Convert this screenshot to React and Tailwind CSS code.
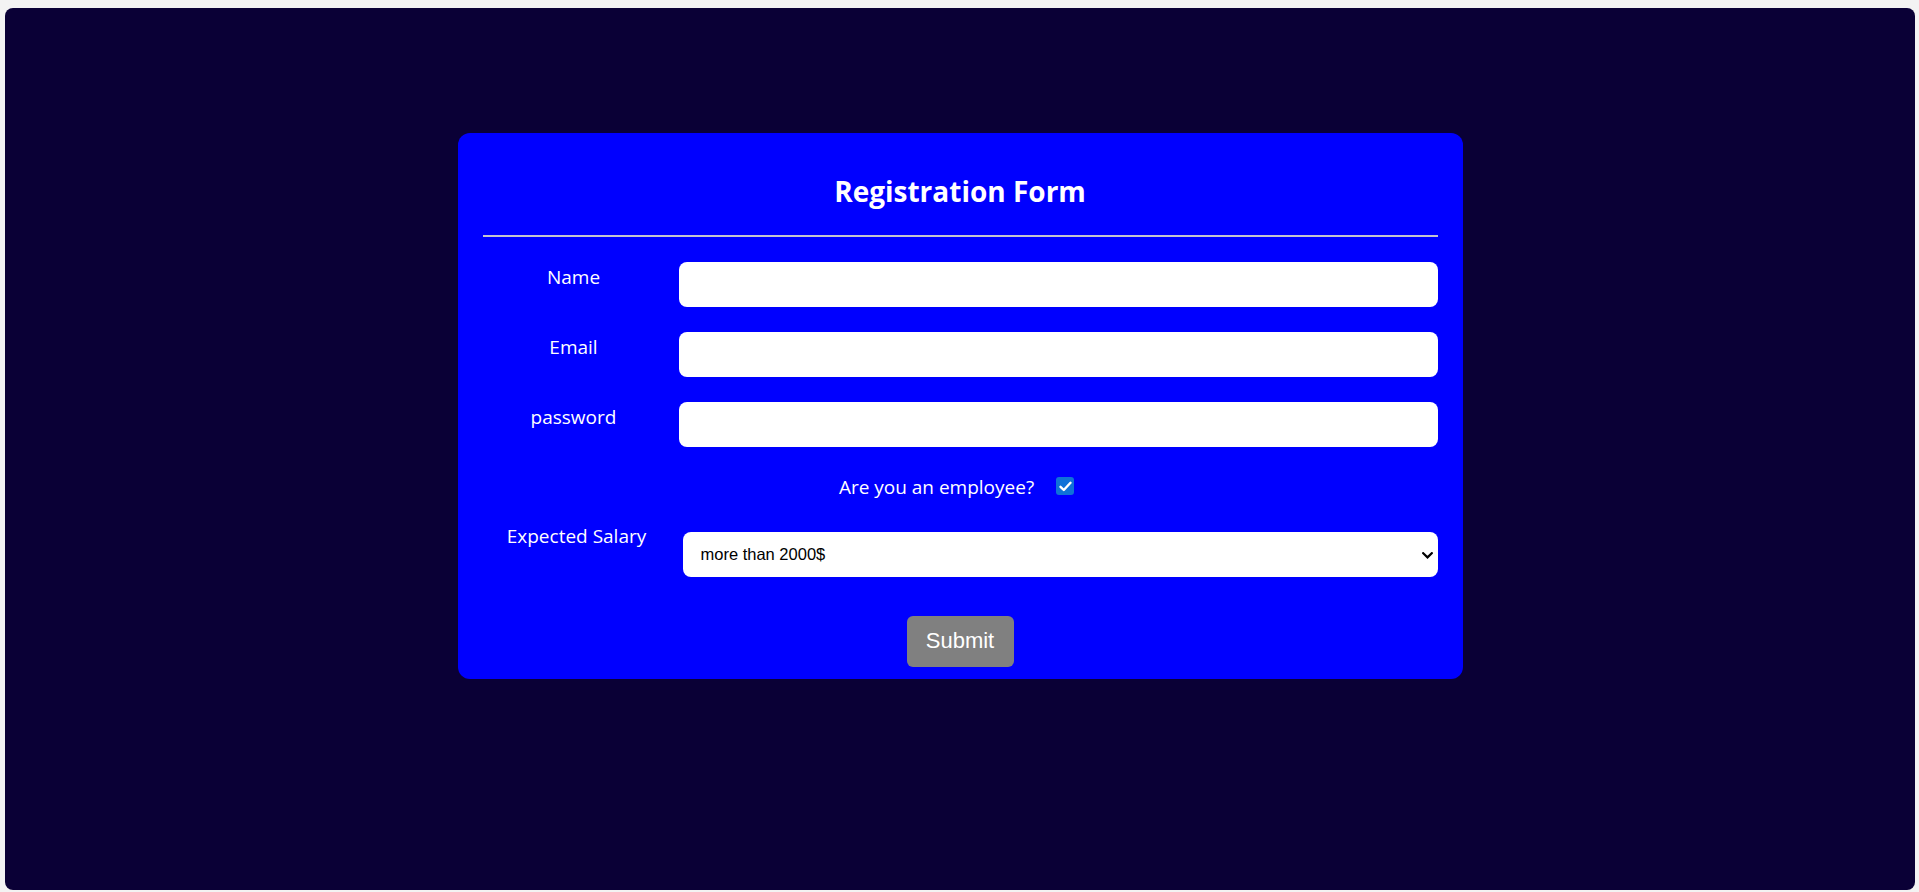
import React from "react";

function Row({ label, type }) {
  return (
    <div className="flex items-start mt-[25px]">
      <label className="w-[182px] text-center text-white text-[19px] leading-[28px] pt-[1px]">{label}</label>
      <input
        type={type}
        className="ml-[14px] flex-1 h-[45px] bg-white rounded-[8px] border-0 outline-none px-3 text-black"
      />
    </div>
  );
}

export default function App() {
  return (
    <div className="min-h-[892px] w-[1919px] bg-[#f3f3f3] pt-[8px] pl-[5px] overflow-hidden" style={{ fontFamily: '"Open Sans", "Noto Sans", sans-serif' }}>
      <div className="w-[1910px] h-[882px] bg-[#0a0036] rounded-[8px] flex justify-center">
        <form
          className="mt-[125px] w-[1005px] self-start bg-[#0000ff] rounded-[12px] px-[25px] pt-[39px] pb-[12px] flex flex-col"
          onSubmit={(e) => e.preventDefault()}
        >
          <h2 className="text-center text-white font-bold text-[28px] leading-[38px]">Registration Form</h2>
          <div className="mt-[25px] h-[2px] bg-[#c4c4d0]" />
          <Row label="Name" type="text" />
          <Row label="Email" type="email" />
          <Row label="password" type="password" />
          <div className="mt-[25px] flex items-center justify-center pr-[7px] h-[28px]">
            <span className="text-white text-[19px] leading-[28px] pt-[1px]">Are you an employee?</span>
            <span className="ml-[22px] w-[18px] h-[18px] rounded-[3px] bg-[#0f72d8] flex items-center justify-center">
              <svg width="13" height="11" viewBox="0 0 13 11" fill="none">
                <path d="M1.5 5.8 L4.8 9 L11.5 1.8" stroke="white" strokeWidth="2.4" strokeLinecap="round" strokeLinejoin="round" />
              </svg>
            </span>
          </div>
          <div className="mt-[21px] flex items-start">
            <label className="w-[188px] text-center text-white text-[19px] leading-[28px] pt-[1px]">Expected Salary</label>
            <div className="relative ml-[12px] flex-1 mt-[11px]">
              <select
                defaultValue="b"
                className="appearance-none w-full h-[45px] bg-white rounded-[8px] border-0 outline-none pl-[18px] text-black text-[16.5px]"
                style={{ fontFamily: '"Liberation Sans", Arial, sans-serif' }}
              >
                <option value="a">less than 2000$</option>
                <option value="b">more than 2000$</option>
              </select>
              <svg className="absolute right-[5px] top-[20px] pointer-events-none" width="11" height="7" viewBox="0 0 11 7" fill="none">
                <path d="M1.2 1.2 L5.5 5.4 L9.8 1.2" stroke="black" strokeWidth="2.2" strokeLinecap="square" />
              </svg>
            </div>
          </div>
          <div className="mt-[39px] flex justify-center">
            <button
              type="submit"
              className="w-[107px] h-[51px] bg-[#808080] rounded-[6px] text-white text-[22px] pb-[3px]"
              style={{ fontFamily: '"Liberation Sans", Arial, sans-serif' }}
            >
              Submit
            </button>
          </div>
        </form>
      </div>
    </div>
  );
}
